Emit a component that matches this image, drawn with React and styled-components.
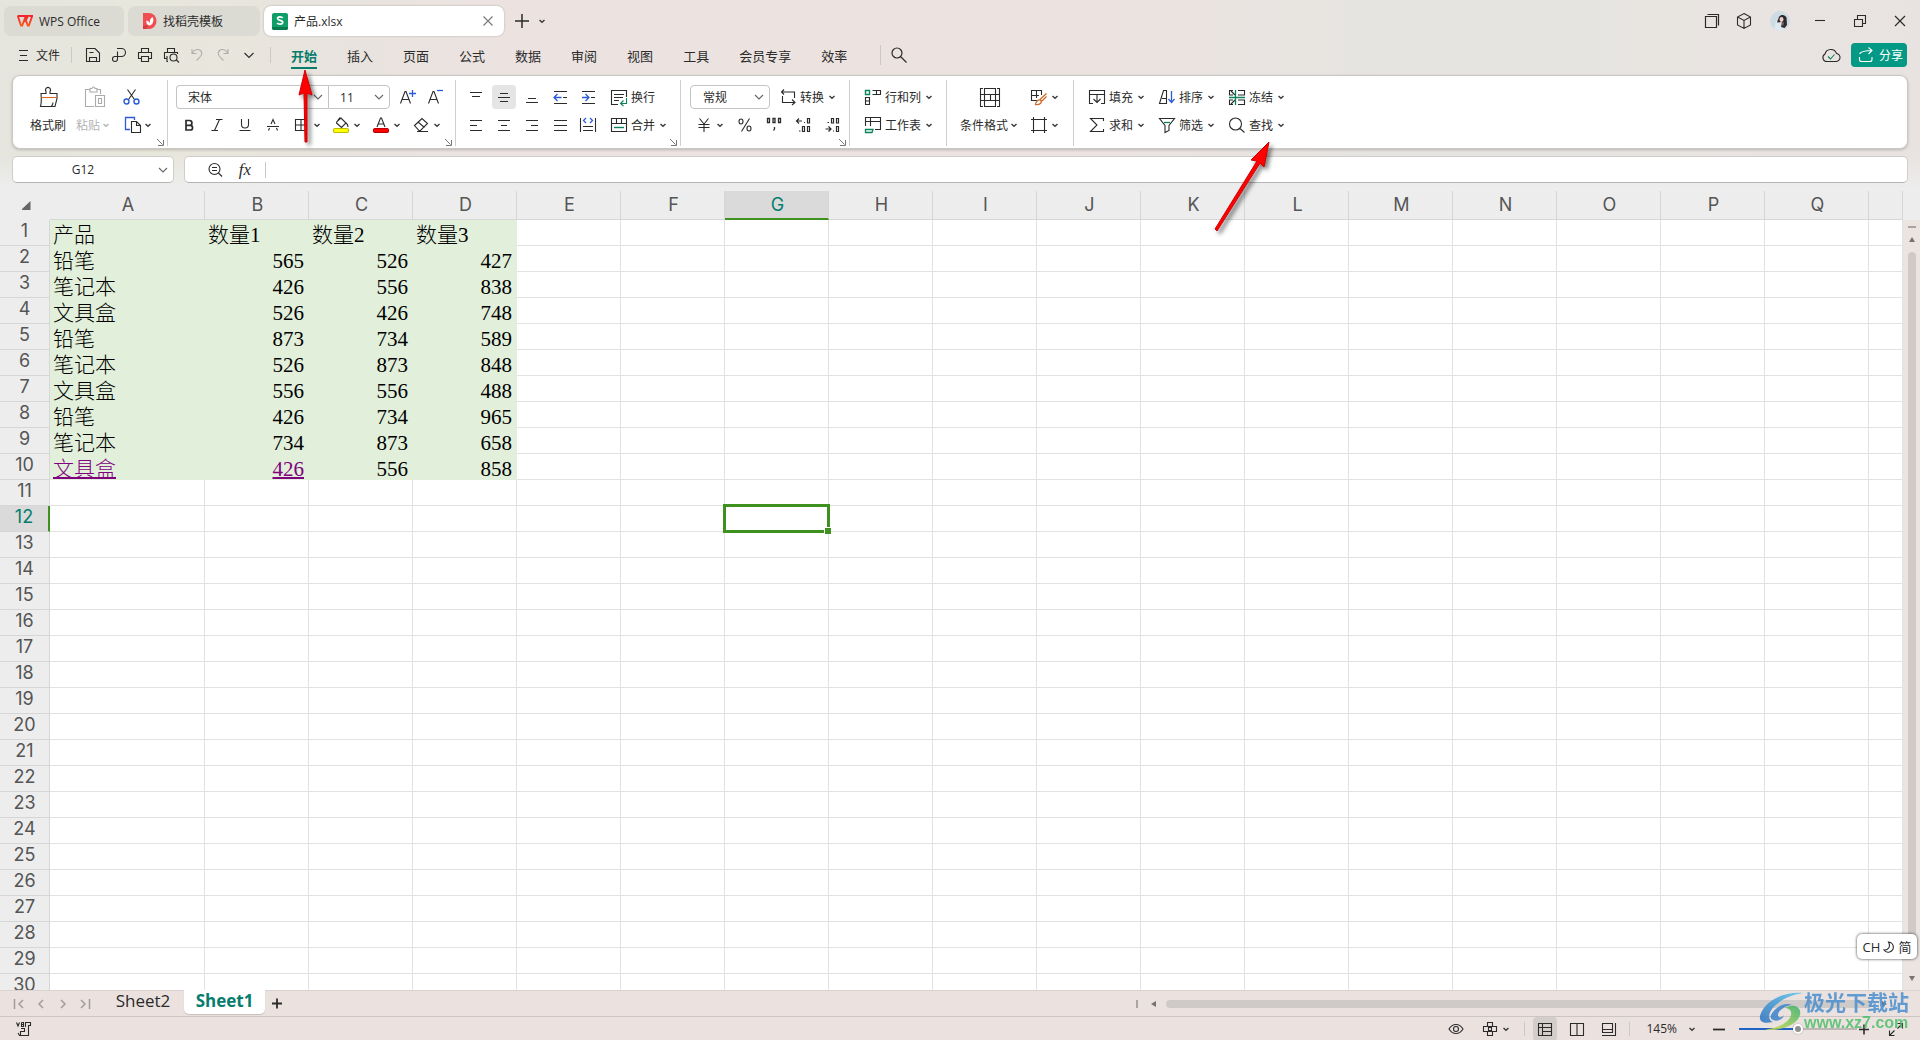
import styled, { createGlobalStyle } from 'styled-components';
import { useState } from 'react';

const ink = '#2b2b2b';
const teal = '#067d6d';
const blue = '#2b5bd7';
const green = '#0b8457';
const orange = '#d0692c';
const uiFont = `'Open Sans', 'Noto Sans CJK SC', sans-serif`;

const GlobalStyle = createGlobalStyle`
  * { box-sizing: border-box; }
  body {
    margin: 0;
    overflow: hidden;
    font-family: ${uiFont};
    font-size: 12px;
    color: ${ink};
  }
  button, input, select { font: inherit; color: inherit; margin: 0; }
  svg { display: block; flex: none; }
`;

const Page = styled.div`
  position: relative;
  height: 100vh;
  display: flex;
  flex-direction: column;
  background:
    linear-gradient(to bottom, rgba(237,237,237,0) 156px, #ededed 188px, #ededed 220px, rgba(237,237,237,0) 221px),
    linear-gradient(to right, #e5e5de 0, #e8e7dc 8%, #e8e3de 18%, #ece3e1 26%, #ece3e1 58%, #e5e4e0 72%, #e5e4e0 81%, #e9e4e1 90%, #e8e3e0 100%);
`;

/* ---------- shared controls ---------- */
const Plain = styled.button`
  display: flex;
  align-items: center;
  justify-content: center;
  gap: ${p => p.$gap || 0}px;
  width: ${p => (p.$w ? `${p.$w}px` : 'auto')};
  height: ${p => p.$h || 24}px;
  padding: 0;
  border: 0;
  border-radius: 4px;
  background: ${p => (p.$on ? '#e5e5e5' : 'transparent')};
  color: ${p => (p.$dim ? '#b3b3b3' : 'inherit')};
  white-space: nowrap;
`;

const Spacer = styled.div`
  flex: 1;
`;

const Rule = styled.span`
  flex: none;
  width: 1px;
  height: ${p => p.$h || 16}px;
  background: #cbc8c5;
`;

const Icon = ({ children, size = 20, color = ink, box = 20 }) => (
  <svg width={size} height={size} viewBox={`0 0 ${box} ${box}`} fill="none" stroke={color} strokeWidth="1.1" aria-hidden="true">
    {children}
  </svg>
);

const Caret = ({ color = '#3c3c3c' }) => (
  <svg width="12" height="12" viewBox="0 0 12 12" fill="none" stroke={color} strokeWidth="1.5" aria-hidden="true">
    <path d="M3.5 5L6 7.2L8.5 5" />
  </svg>
);

const Chevron = ({ color = '#666' }) => (
  <svg width="20" height="12" viewBox="0 0 20 12" fill="none" stroke={color} strokeWidth="1.1" aria-hidden="true">
    <path d="M6 4L10 8L14 4" />
  </svg>
);

/* ---------- window tabs ---------- */
const TitleBar = styled.header`
  display: flex;
  align-items: center;
  gap: 4px;
  height: 42px;
  padding: 0 0 0 4px;
`;

const DocTab = styled.button`
  display: flex;
  align-items: center;
  gap: 6px;
  width: ${p => p.$w}px;
  height: 30px;
  padding: 0 8px 0 ${p => p.$pad}px;
  border: 0;
  border-radius: 7px;
  text-align: left;
  background: ${p => (p.$active ? '#fff' : '#dbdad3')};
  box-shadow: ${p => (p.$active ? '0 0 2px rgba(0,0,0,.3)' : 'none')};
`;

const TabButtons = styled.div`
  display: flex;
  align-items: center;
`;

const WindowButtons = styled.div`
  display: flex;
  align-items: center;

  button { width: 40px; }
  button:nth-child(-n + 2) { width: 32px; }
`;

const WpsLogo = () => (
  <svg width="16" height="12" viewBox="0 0 16 12" aria-hidden="true">
    <defs>
      <linearGradient id="wps" x1="0" y1="0" x2="0" y2="1">
        <stop offset="0" stopColor="#f5222d" />
        <stop offset="1" stopColor="#fb5b1c" />
      </linearGradient>
    </defs>
    <path d="M.6 1H11L9.7 3.6L8.2 1M.8 1L4 10.6H5.2L8 3.4L10.8 10.6H11.9L15.2 1H12.2" fill="none" stroke="url(#wps)" strokeWidth="1.9" />
  </svg>
);

const DocerLogo = () => (
  <svg width="15" height="16" viewBox="0 0 15 16" aria-hidden="true">
    <path d="M1 0H7A7.5 8 0 0 1 7 16H2.5A1.5 1.5 0 0 1 1 14.500Z" fill="#f04f52" />
    <path d="M1 12.500H6L4 16H1Z" fill="#d43b42" />
    <path d="M8 12.500C4.500 12 4 9.500 4.500 7.500C6.500 8 7.500 9 8 10.500C7.300 7.500 8.500 5 10.800 4C12 7 11.500 11 8 12.500Z" fill="#fff" />
  </svg>
);

const SheetLogo = () => (
  <svg width="16" height="17" viewBox="0 0 16 17" aria-hidden="true">
    <rect width="16" height="17" rx="2" fill="#0f9d68" />
    <path d="M0 14H16V15A2 2 0 0 1 14 17H2A2 2 0 0 1 0 15Z" fill="#087a4e" />
    <path d="M10.700 5C10 3.700 5.500 3.200 5.500 5.600C5.500 8 10.700 6.700 10.700 9.300C10.700 11.800 6 11.500 5.200 9.800" fill="none" stroke="#fff" strokeWidth="1.700" />
  </svg>
);

const Avatar = () => (
  <svg width="20" height="20" viewBox="0 0 20 20" aria-hidden="true">
    <defs><clipPath id="av"><circle cx="10" cy="10" r="10" /></clipPath></defs>
    <g clipPath="url(#av)">
      <rect width="20" height="20" fill="#cddce2" />
      <path d="M4 20L6 10L11 10L15 20Z" fill="#dfeaee" />
      <path d="M9 6C11 3 15 3.500 16.500 6.500L17 14L14.500 17L11 16L12 11L7 11.500Z" fill="#2c2830" />
      <ellipse cx="11.500" cy="8.500" rx="2" ry="2.400" fill="#ecd0c6" />
      <path d="M11.500 12L14 11L13 15.500Z" fill="#9a6468" />
    </g>
  </svg>
);

/* ---------- menu row ---------- */
const MenuBar = styled.nav`
  display: flex;
  align-items: center;
  height: 26px;
  padding: 0 13px 0 15px;
`;

const QuickAccess = styled.div`
  display: flex;
  align-items: center;
  gap: 6px;
  margin: 0 11px;
`;

const MenuTabs = styled.div`
  display: flex;
  align-items: center;
  gap: 30px;
  margin: 0 33px 0 20px;
`;

const MenuTab = styled.button`
  height: 28px;
  padding: 0;
  border: 0;
  font-size: 13px;
  color: ${p => (p.$active ? teal : ink)};
  font-weight: ${p => (p.$active ? 700 : 400)};
  background: ${p => (p.$active ? `linear-gradient(${teal}, ${teal}) bottom / 100% 2px no-repeat` : 'none')};
`;

const QuickRule = styled(Rule)`
  margin-left: 11px;
`;

const SearchButton = styled(Plain)`
  margin-left: 8px;
`;

const ShareButton = styled.button`
  display: flex;
  align-items: center;
  gap: 3px;
  width: 56px;
  height: 24px;
  margin-left: 10px;
  padding: 0 5px;
  border: 0;
  border-radius: 4px;
  background: #049984;
  color: #fff;
  white-space: nowrap;
`;

/* ---------- ribbon ---------- */
const Ribbon = styled.section`
  display: flex;
  align-items: flex-start;
  height: 74px;
  margin: 7px 12px 0;
  border: 1px solid #cac8c4;
  border-radius: 8px;
  background: #fff;
  box-shadow: 0 1px 3px rgba(0, 0, 0, .2);
`;

const GroupBox = styled.div`
  display: flex;
  flex-direction: column;
  gap: 1px;
  height: 66px;
  margin-top: 4px;
  padding: 5px 0 0;
  border-right: ${p => (p.$last ? 0 : '1px solid #cfcfcf')};
`;

const GroupBody = styled.div`
  display: flex;
  gap: ${p => p.$gap}px;
  padding: 0 ${p => p.$r}px 0 ${p => p.$l}px;
`;

const Launcher = styled.button`
  align-self: flex-end;
  width: 8px;
  height: 8px;
  margin-right: 3px;
  padding: 0;
  border: 0;
  background: none;
`;

const Column = styled.div`
  display: flex;
  flex-direction: column;
  align-items: flex-start;
  gap: 4px;
`;

const Line = styled.div`
  display: flex;
  align-items: center;
  gap: ${p => p.$gap}px;
  padding-left: ${p => p.$indent || 0}px;
  height: 24px;
`;

const BigTool = styled.button`
  display: flex;
  flex-direction: column;
  align-items: center;
  gap: 4px;
  padding: 0;
  border: 0;
  background: none;
  white-space: nowrap;
  color: ${p => (p.$dim ? '#b3b3b3' : 'inherit')};

  span {
    display: flex;
    align-items: center;
    height: 24px;
  }
`;

const Picker = styled.label`
  display: flex;
  align-items: center;
  width: ${p => p.$w}px;
  height: 24px;
  padding-left: ${p => p.$pad}px;
  border: 1px solid #c4c4c4;
  border-radius: ${p => p.$radius || '4px'};
  border-right-width: ${p => (p.$joined ? 0 : 1)}px;

  select {
    flex: 1;
    min-width: 0;
    padding: 0;
    border: 0;
    outline: 0;
    appearance: none;
    background: none;
  }
`;

const Group = ({ l = 12, r = 12, gap = 10, launcher, last, children }) => (
  <GroupBox $last={last}>
    <GroupBody $l={l} $r={r} $gap={gap}>{children}</GroupBody>
    {launcher && (
      <Launcher aria-label={launcher}>
        <svg width="8" height="8" viewBox="0 0 8 8" fill="none" stroke="#777"><path d="M1 1L6.500 6.500M7.500 2V7.500H2" /></svg>
      </Launcher>
    )}
  </GroupBox>
);

const Tool = ({ icon, label, name, arrow = true }) => (
  <Plain $gap={label ? 2 : 0} aria-label={name}>
    <Icon>{icon}</Icon>
    {label}
    {arrow && <Caret />}
  </Plain>
);

const FontPicker = ({ name, value, ...rest }) => (
  <Picker {...rest}>
    <select aria-label={name} defaultValue={value}>
      <option>{value}</option>
    </select>
    <Chevron />
  </Picker>
);

const quick = [
  { name: '保存', icon: <path d="M3.500 3.500H12L16.500 8V16.500H3.500ZM6.500 16.500V12.500H13.500V16.500M6.500 7.500H10.500" /> },
  { name: '输出为PDF', icon: <path d="M8 3.500H12.500A3.500 3.500 0 0 1 12.500 11.500H6A2.500 2.500 0 1 0 8.500 14V6.500" /> },
  { name: '打印', icon: <path d="M6.500 7V3.500H13.500V7M6 13.500H3.500V7.500H16.500V13.500H14M6.500 11.500H13.500V16.500H6.500Z" /> },
  { name: '打印预览', icon: <path d="M6.500 7V3.500H13.500V7M6 13.500H3.500V7.500H16.500V9M7 16.500H6V11M15.500 15L18 17.500M9 12.500A3.500 3.500 0 1 0 16 12.500A3.500 3.500 0 1 0 9 12.500" /> },
  { name: '撤销', dim: true, icon: <path d="M5 4V8.500H9.500M5 8.500C7 4.500 11 3.500 13.500 5.500C16.500 8.500 14 11.500 9.500 15.500" /> },
  { name: '恢复', dim: true, icon: <path d="M15 4V8.500H10.500M15 8.500C13 4.500 9 3.500 6.500 5.500C3.500 8.500 6 11.500 10.500 15.500" /> },
  { name: '更多', icon: <path d="M5.500 8L10 12.500L14.500 8" /> },
];

const menu = ['开始', '插入', '页面', '公式', '数据', '审阅', '视图', '工具', '会员专享', '效率'];

const alignTools = [
  { name: '顶端对齐', icon: <path d="M4 5.500H16M6 9.500H14" /> },
  { name: '垂直居中', on: true, icon: <path d="M6 6.500H14M4 10.500H16M6 14.500H14" /> },
  { name: '底端对齐', icon: <path d="M6 11.500H14M4 15.500H16" /> },
  { name: '减少缩进', icon: <><path d="M4 4.500H17M13 10.500H17M4 16.500H17" /><path d="M4 10.500H11.500M7.500 7L4 10.500L7.500 14" stroke={blue} strokeWidth="1.300" /></> },
  { name: '增加缩进', icon: <><path d="M4 4.500H17M13 10.500H17M4 16.500H17" /><path d="M4 10.500H11M7.500 7L11 10.500L7.500 14" stroke={blue} strokeWidth="1.300" /></> },
  { name: '左对齐', icon: <path d="M4 5.500H16M4 10.500H11M4 15.500H16" /> },
  { name: '水平居中', icon: <path d="M4 5.500H16M7 10.500H13M4 15.500H16" /> },
  { name: '右对齐', icon: <path d="M4 5.500H16M9 10.500H16M4 15.500H16" /> },
  { name: '两端对齐', icon: <path d="M4 5.500H17M4 10.500H17M4 15.500H17" /> },
  { name: '分散对齐', icon: <><path d="M2.500 3V17M17.500 3V17M5 11.500H15M5 15.500H15" /><path d="M8 3L5.500 5.500L8 8M12 3L14.500 5.500L12 8" stroke={blue} strokeWidth="1.300" /></> },
];

const AlignGrid = styled.div`
  display: grid;
  grid-template-columns: repeat(5, 24px);
  gap: 4px;
`;

const HomeRibbon = () => (
  <Ribbon>
    <Group l={17} r={13} launcher="剪贴板设置">
      <BigTool>
        <Icon size={24} box={24}>
          <path d="M4.500 21.500C5.500 18 5.500 14 5 8.500H10V6.500A2.500 2.500 0 1 1 14 6.500V8.500H21V13.500L19 21.500ZM15.500 21C16.500 20 17 18.500 17 17.500" />
          <path d="M5 12.500H21" stroke={orange} />
        </Icon>
        <span>格式刷</span>
      </BigTool>
      <BigTool $dim>
        <Icon size={24} box={24} color="#ababab">
          <path d="M8 4.500H3.500V21.500H12M15 4.500H18.500V9M8 3.500H10A1.500 1.500 0 0 1 13 3.500H15V7H8ZM13.500 10.500H22.500V21.500H13.500ZM16.500 13.500H19.500V18.500H16.500Z" />
        </Icon>
        <span>粘贴<Caret color="#b3b3b3" /></span>
      </BigTool>
      <Column>
        <Plain $w={20} aria-label="剪切">
          <Icon>
            <path d="M5.500 2.500L12.500 12.500M13.500 2.500L6.500 12.500" />
            <path d="M2 14.500A2.500 2.500 0 1 0 7 14.500A2.500 2.500 0 1 0 2 14.500M12 14.500A2.500 2.500 0 1 0 17 14.500A2.500 2.500 0 1 0 12 14.500" stroke={blue} strokeWidth="1.400" />
          </Icon>
        </Plain>
        <Tool name="复制" icon={<><path d="M8 14.500H3.500V2.500H12.500V5" stroke={blue} strokeWidth="1.300" /><path d="M9.500 6.500H14.500L18.500 10.500V17.500H9.500ZM14.500 6.500V10.500H18.500" /></>} />
      </Column>
    </Group>

    <Group l={8} r={9} launcher="字体设置">
      <Column>
        <Line $gap={8}>
          <Line $gap={0}>
            <FontPicker name="字体" value="宋体" $w={152} $pad={11} $joined $radius="4px 0 0 4px" />
            <FontPicker name="字号" value="11" $w={62} $pad={11} $radius="0 4px 4px 0" />
          </Line>
          <Plain $w={20} aria-label="增大字号">
            <Icon><path d="M2.500 16.500L7 4.500H8L12.500 16.500M4 12.500H11" /><path d="M11 6.500H18M14.500 3V10" stroke={blue} strokeWidth="1.300" /></Icon>
          </Plain>
          <Plain $w={20} aria-label="减小字号">
            <Icon><path d="M2.500 16.500L7 4.500H8L12.500 16.500M4 12.500H11" /><path d="M11 3.500H17" stroke={blue} strokeWidth="1.300" /></Icon>
          </Plain>
        </Line>
        <Line $gap={8} $indent={3}>
          <Plain $w={20} aria-label="加粗"><Icon><path d="M7 5.500H10.500A2.300 2.300 0 0 1 10.500 10.300H7ZM7 10.300H11.200A2.300 2.300 0 0 1 11.200 15H7Z" strokeWidth="1.700" /></Icon></Plain>
          <Plain $w={20} aria-label="倾斜"><Icon><path d="M9 4.500H15.500M4.500 15.500H11M12.500 4.500L7.500 15.500" /></Icon></Plain>
          <Plain $w={20} aria-label="下划线"><Icon><path d="M6.500 4V9.500A3.500 3.500 0 0 0 13.500 9.500V4M4.500 15.500H15.500" /></Icon></Plain>
          <Plain $w={20} aria-label="删除线"><Icon><path d="M8 9L10 4.500L12 9M6.500 13L5.500 15.500M13.500 13L14.500 15.500M4 11.500H16" /></Icon></Plain>
          <Tool name="边框" icon={<path d="M4.500 4.500H15.500V15.500H4.500ZM10 4.500V15.500M4.500 10H15.500" />} />
          <Tool name="填充颜色" icon={<><path d="M6 6.500L10 3L15 8L10.500 12.500L5.500 8ZM9 2.500L7 5M15 8C16.500 9 17 10.500 17 12" /><rect x="2.500" y="13.500" width="15" height="4" rx="1.500" fill="#ff0" stroke="#bdbd00" /></>} />
          <Tool name="字体颜色" icon={<><path d="M6 12L9.500 3H10.500L14 12M7.500 9H12.500" /><rect x="2.500" y="13.500" width="15" height="4" rx="1.500" fill="#f00" stroke="#b80000" /></>} />
          <Tool name="清除" icon={<path d="M3.500 10.500L11 3.500L16.500 8.500L9.500 15.500H8ZM7 7L13.500 12.500M6 16.500H17" />} />
        </Line>
      </Column>
    </Group>

    <Group l={8} r={11} gap={9} launcher="对齐设置">
      <AlignGrid>
        {alignTools.map(t => (
          <Plain key={t.name} $w={24} $on={t.on} aria-label={t.name}><Icon>{t.icon}</Icon></Plain>
        ))}
      </AlignGrid>
      <Column>
        <Tool arrow={false} label="换行" icon={<><path d="M9 17.500H2.500V3.500H17.500V10M5 7.500H15M5 10.500H14M5 13.500H10" /><path d="M17.500 11V16.500H12M14.500 13.500L11.500 16.500L14.500 19" stroke={green} /></>} />
        <Tool label="合并" icon={<><path d="M2.500 3.500H17.500V16.500H2.500ZM2.500 8.500H17.500M7.500 3.500V8.500M12.500 3.500V8.500" /><path d="M5 12.500H15" stroke={green} strokeWidth="1.400" /></>} />
      </Column>
    </Group>

    <Group l={9} r={7} launcher="数字格式设置">
      <Column>
        <Line $gap={8}>
          <FontPicker name="数字格式" value="常规" $w={80} $pad={12} />
          <Tool label="转换" icon={<path d="M6 2.500L3.500 5L6 7.500M3.500 5H16.500V11M14 12.500L17 15.500L14 18M16.500 15.500H4.500V9" />} />
        </Line>
        <Line $gap={9} $indent={4}>
          <Tool name="货币" icon={<path d="M5.500 3.500L10 9L14.500 3.500M4.500 9.500H15.500M4.500 12.500H15.500M10 9V17" />} />
          <Plain $w={20} aria-label="百分比"><Icon><path d="M14.500 3.500L6.500 16.500M4 6.500A2 2.500 0 1 0 8 6.500A2 2.500 0 1 0 4 6.500M12 13.500A2 2.500 0 1 0 16 13.500A2 2.500 0 1 0 12 13.500" /></Icon></Plain>
          <Plain $w={20} aria-label="千位分隔"><Icon><path d="M3.500 3.500H5.500V7.500H3.500ZM9 3.500H11V7.500H9ZM14.500 3.500H16.500V7.500H14.500ZM10.500 12V14L9.500 15.500" strokeWidth="1.300" /></Icon></Plain>
          <Plain $w={20} aria-label="增加小数位"><Icon><path d="M3.500 6H9M6 3.500L3.500 6L6 8.500M14.500 3.500H16.500V8H14.500ZM9.500 11.500H11.500V16.500H9.500ZM14.500 11.500H16.500V16.500H14.500ZM11 7.500H12M6 16H7.500" strokeWidth="1.200" /></Icon></Plain>
          <Plain $w={20} aria-label="减少小数位"><Icon><path d="M3.500 14H9M6.500 11.500L9 14L6.500 16.500M14.500 11.500H16.500V16.500H14.500ZM9.500 3.500H11.500V8H9.500ZM14.500 3.500H16.500V8H14.500ZM11 16H12M5.500 7.500H7" strokeWidth="1.200" /></Icon></Plain>
        </Line>
      </Column>
    </Group>

    <Group l={13} r={11}>
      <Column>
        <Tool label="行和列" icon={<><path d="M9.500 3.500H17.500V7.500H9.500M13.500 3.500V7.500M2.500 10.500H6.500V17.500H2.500ZM2.500 14H6.500" /><path d="M2.500 3.500H6.500V7.500H2.500Z" stroke={green} strokeWidth="1.400" /></>} />
        <Tool label="工作表" icon={<><path d="M2.500 11V2.500H17.500V14.500H12M2.500 6.500H17.500M7.500 2.500V11" /><path d="M2.500 14.500H10L9 17.500H2.500Z" stroke={green} strokeWidth="1.300" /></>} />
      </Column>
    </Group>

    <Group l={13} gap={9}>
      <BigTool>
        <Icon size={24} box={24}>
          <path d="M5 3.500H2.500V21.500H5M19 3.500H21.500V21.500H19M6.500 3.500H17.500V21.500H6.500ZM2.500 9.500H21.500M2.500 15.500H21.500M12.500 9.500V15.500" />
        </Icon>
        <span>条件格式<Caret /></span>
      </BigTool>
      <Column>
        <Tool name="表格样式" icon={<><path d="M8 13.500H2.500V3.500H12.500V8M2.500 8.500H10M7.500 3.500V11" /><path d="M17.500 6.500L11 12.500M17.500 9.500L13 14M6.500 17.500C7 14 9 12.500 11.500 13C13.500 15 11.500 18 6.500 17.500Z" stroke={orange} strokeWidth="1.300" /></>} />
        <Tool name="单元格样式" icon={<path d="M4.500 2V18M15.500 2V18M2 4.500H18M2 15.500H18" />} />
      </Column>
    </Group>

    <Group l={13} last>
      <Column>
        <Tool label="填充" icon={<path d="M6 16.500H2.500V3.500H17.500V16.500H14M2.500 7.500H17.500M10 8V15M6.500 12L10 15.500L13.500 12" />} />
        <Tool label="求和" icon={<path d="M16.500 6V3.500H3.500L10 10L3.500 16.500H16.500V14" />} />
      </Column>
      <Column>
        <Tool label="排序" icon={<><path d="M2.500 16.500L6.500 3.500H9.500V16.500ZM5 11.500H9.500" /><path d="M14.500 4V15M11.500 12L14.500 15.500L17.500 12" stroke={blue} strokeWidth="1.300" /></>} />
        <Tool label="筛选" icon={<><path d="M2.500 3.500H17.500L12 10.500V15.500L8 17.500V10.500Z" /><path d="M7 7.500H13" stroke={green} strokeWidth="1.300" /></>} />
      </Column>
      <Column>
        <Tool label="冻结" icon={<><path d="M6 3.500H2.500V8H6M6 13H2.500V17.500H6M11 3.500H17.500V8H11M11 13H17.500V17.500H11M4 4L8 8M4 17L8 13" /><path d="M2 10.500H18M8.500 3V18" stroke={green} strokeWidth="1.300" /></>} />
        <Tool label="查找" icon={<path d="M2.500 9A6 6 0 1 0 14.500 9A6 6 0 1 0 2.500 9M12.500 13L17.500 17.500" />} />
      </Column>
    </Group>
  </Ribbon>
);

/* ---------- formula bar ---------- */
const FormulaRow = styled.div`
  display: flex;
  gap: 10px;
  height: 27px;
  margin: 7px 12px 8px;
`;

const Field = styled.div`
  display: flex;
  align-items: center;
  flex: ${p => (p.$w ? 'none' : 1)};
  width: ${p => (p.$w ? `${p.$w}px` : 'auto')};
  padding-left: ${p => p.$pad || 0}px;
  border: 1px solid #cfcdca;
  border-bottom-color: #b5b5b3;
  border-radius: 5px;
  background: #fff;

  input {
    flex: 1;
    min-width: 0;
    padding: 0;
    border: 0;
    outline: 0;
    background: none;
    text-align: ${p => (p.$w ? 'center' : 'left')};
  }
`;

const Fx = styled.em`
  width: 40px;
  text-align: center;
  font: italic 17px 'Liberation Serif', serif;
`;

/* ---------- sheet ---------- */
const SheetArea = styled.main`
  display: flex;
  flex: 1;
  min-height: 0;
`;

const GridClip = styled.div`
  flex: 1;
  min-width: 0;
  overflow: hidden;
  background: #fff;
`;

const Grid = styled.table`
  width: 100%;
  table-layout: fixed;
  border-collapse: separate;
  border-spacing: 0;
`;

const HeadCell = styled.th`
  height: 29px;
  padding: 0 0 0 2px;
  border-right: 1px solid #d6d6d6;
  border-bottom: ${p => (p.$on ? '2px solid #3f911f' : '1px solid #d6d6d6')};
  background: ${p => (p.$on ? '#dadada' : '#ededed')};
  color: ${p => (p.$on ? teal : '#555')};
  font: 400 18px/20px Inter, sans-serif;

  &:first-child {
    border: 0;
  }
  svg { margin-left: 20px; }
`;

const RowHead = styled.th`
  height: 26px;
  padding: 0;
  border-right: ${p => (p.$on ? '2px solid #3f911f' : '1px solid #d6d6d6')};
  border-bottom: 1px solid #d6d6d6;
  background: ${p => (p.$on ? '#dadada' : '#ededed')};
  color: ${p => (p.$on ? teal : '#555')};
  font: 400 18px/22px Inter, sans-serif;
  vertical-align: top;
`;

const Cell = styled.td`
  position: relative;
  height: 26px;
  padding: 0 4px 0 3px;
  border-right: 1px solid ${p => (p.$filled ? '#e2efda' : '#e2e2e2')};
  border-bottom: 1px solid ${p => (p.$filled ? '#e2efda' : '#e2e2e2')};
  background: ${p => (p.$filled ? '#e2efda' : '#fff')};
  color: ${p => (p.$visited ? '#800080' : '#000')};
  font: 21px/20px 'Liberation Serif', 'Noto Sans CJK SC', serif;
  font-weight: 300;
  text-align: ${p => (p.$num ? 'right' : 'left')};
  vertical-align: bottom;
  white-space: nowrap;

  a {
    color: inherit;
    text-decoration: underline 2px;
    text-underline-offset: 1px;
  }
`;

const Selection = styled.div`
  position: absolute;
  z-index: 1;
  inset: -2px;
  border: 3px solid #3f911f;

  &::after {
    content: '';
    position: absolute;
    right: -4px;
    bottom: -4px;
    width: 6px;
    height: 6px;
    border: solid #fff;
    border-width: 1px 0 0 1px;
    background: #3f911f;
  }
`;

const VScroll = styled.div`
  display: flex;
  flex-direction: column;
  align-items: center;
  width: 17px;
  margin-top: 29px;
  padding: 6px 0 8px;
  gap: 8px;
  background: #ebe4e1;

  i {
    width: 8px;
    height: 2px;
    background: #aaa5a3;
  }
`;

const VTrack = styled.div`
  display: flex;
  flex-direction: column;
  flex: 1;

  &::before {
    content: '';
    flex: 0 0 96%;
    width: 8px;
    border-radius: 4px;
    background: #cfcac8;
  }
`;

const columns = 'ABCDEFGHIJKLMNOPQ'.split('');

const data = [
  ['产品', '数量1', '数量2', '数量3'],
  ['铅笔', 565, 526, 427],
  ['笔记本', 426, 556, 838],
  ['文具盒', 526, 426, 748],
  ['铅笔', 873, 734, 589],
  ['笔记本', 526, 873, 848],
  ['文具盒', 556, 556, 488],
  ['铅笔', 426, 734, 965],
  ['笔记本', 734, 873, 658],
  ['文具盒', 426, 556, 858],
];

const rows = Array.from({ length: 30 }, (_, i) => i + 1);

const Triangle = ({ d }) => (
  <svg width="8" height="8" viewBox="0 0 8 8" fill="#77716f" aria-hidden="true"><path d={d} /></svg>
);

const Spreadsheet = () => (
  <SheetArea>
    <GridClip>
      <Grid>
        <colgroup>
          <col width="50" />
          <col width="155" />
          {columns.slice(1).map(c => <col key={c} width="104" />)}
          <col />
        </colgroup>
        <thead>
          <tr>
            <HeadCell aria-label="全选">
              <svg width="9" height="9" viewBox="0 0 9 9" fill="#666"><path d="M8.500 0V9H0V8Z" /></svg>
            </HeadCell>
            {columns.map(c => <HeadCell key={c} scope="col" $on={c === 'G'}>{c}</HeadCell>)}
            <HeadCell />
          </tr>
        </thead>
        <tbody>
          {rows.map(r => (
            <tr key={r}>
              <RowHead scope="row" $on={r === 12}>{r}</RowHead>
              {columns.map((c, i) => {
                const value = data[r - 1]?.[i];
                const visited = r === 10 && i < 2;
                return (
                  <Cell key={c} $filled={value !== undefined} $num={typeof value === 'number'} $visited={visited}>
                    {visited ? <a href="#sheet">{value}</a> : value}
                    {c === 'G' && r === 12 && <Selection />}
                  </Cell>
                );
              })}
              <Cell />
            </tr>
          ))}
        </tbody>
      </Grid>
    </GridClip>
    <VScroll>
      <i />
      <Triangle d="M4 1L7 6H1Z" />
      <VTrack />
      <Triangle d="M1 2H7L4 7Z" />
    </VScroll>
  </SheetArea>
);

/* ---------- sheet tabs and status ---------- */
const SheetBar = styled.div`
  display: flex;
  align-items: center;
  height: 27px;
  padding: 0 32px 0 8px;
  border-top: 1px solid #d8d3d1;
  border-bottom: 1px solid #cdc5c3;
  background: #ebe2df;
`;

const SheetTab = styled.button`
  align-self: flex-start;
  width: ${p => p.$w}px;
  height: 24px;
  margin-top: -1px;
  padding: 0 0 2px ${p => (p.$active ? 0 : 6)}px;
  border: 0;
  border-radius: 0 0 5px 5px;
  font-size: 17px;
  line-height: 22px;
  font-weight: ${p => (p.$active ? 700 : 400)};
  color: ${p => (p.$active ? teal : ink)};
  background: ${p => (p.$active ? '#fff' : 'none')};
  box-shadow: ${p => (p.$active ? '0 1px 1px rgba(0,0,0,.15)' : 'none')};
`;

const HScroll = styled.div`
  display: flex;
  align-items: center;
  gap: 8px;
  width: 40%;

  i {
    width: 2px;
    height: 8px;
    margin-right: 4px;
    background: #aaa5a3;
  }
`;

const HThumb = styled.div`
  flex: 1;
  height: 8px;
  border-radius: 4px;
  background: #cfcac8;
`;

const StatusBar = styled.footer`
  display: flex;
  align-items: center;
  height: 23px;
  padding: 0 14px;
  background: #ebe2e0;
`;

const ReadMode = styled(Plain)`
  margin: 0 12px 0 14px;
`;

const Views = styled.div`
  display: flex;
  gap: 8px;
  margin: 0 8px;
`;

const View = styled(Plain)`
  background: ${p => (p.$on ? '#d3cdcb' : 'none')};
`;

const ZoomValue = styled(Plain)`
  gap: 9px;
  margin: 0 11px 0 16px;
`;

const Zoom = styled.input`
  appearance: none;
  width: 118px;
  height: 12px;

  /* outranks the margin reset on inputs */
  && { margin: 0 0 0 10px; }

  background: linear-gradient(to right, #2063c8 50%, #bdb7b5 50%) center / 100% 2px no-repeat;

  &::-webkit-slider-thumb {
    appearance: none;
    width: 10px;
    height: 10px;
    border: 2px solid #fff;
    border-radius: 50%;
    background: #8e8e8e;
    box-shadow: 0 0 2px rgba(0, 0, 0, .3);
  }
`;

const FullScreen = styled(Plain)`
  margin-left: 15px;
`;

/* ---------- overlays ---------- */
const ImeBadge = styled.div`
  position: absolute;
  right: 3px;
  bottom: 81px;
  display: flex;
  align-items: center;
  justify-content: center;
  gap: 3px;
  width: 60px;
  height: 25px;
  border-radius: 5px;
  background: #fff;
  font-size: 13px;
  box-shadow: 0 0 3px rgba(0, 0, 0, .8);
`;

const Watermark = styled.div`
  position: absolute;
  right: 11px;
  bottom: 7px;
  display: flex;
  align-items: center;
  pointer-events: none;
  opacity: .85;
`;

const WatermarkText = styled.div`
  font: 700 21px/24px 'Noto Sans CJK SC', sans-serif;
  color: #4a8fd0;

  small {
    display: block;
    font: 700 16px/20px 'Liberation Sans', sans-serif;
    color: #4fbf6b;
  }
`;

const Arrows = styled.svg`
  position: absolute;
  left: 0;
  top: 0;
  pointer-events: none;
  filter: drop-shadow(3px 3px 2px rgba(0, 0, 0, .5));
`;

const App = () => {
  const [zoom, setZoom] = useState(50);

  return (
    <Page>
      <GlobalStyle />
      <TitleBar>
        <DocTab $w={120} $pad={13}><WpsLogo />WPS Office</DocTab>
        <DocTab $w={132} $pad={14}><DocerLogo />找稻壳模板</DocTab>
        <DocTab $w={240} $pad={8} $active>
          <SheetLogo />产品.xlsx
          <Spacer />
          <Icon size={16} box={16} color="#777"><path d="M3.500 3.500L12.500 12.500M12.500 3.500L3.500 12.500" /></Icon>
        </DocTab>
        <TabButtons>
          <Plain $w={28} aria-label="新建"><Icon><path d="M10 3V17M3 10H17" strokeWidth="1.500" /></Icon></Plain>
          <Plain $w={12} aria-label="标签列表"><Caret /></Plain>
        </TabButtons>
        <Spacer />
        <WindowButtons>
          <Plain aria-label="窗口"><Icon><path d="M3.500 5.500H14.500V16.500H3.500ZM5.500 3.500H16.500V14.500" strokeWidth="1.200" /></Icon></Plain>
          <Plain aria-label="应用"><Icon><path d="M10 2.500L16.500 6V14L10 17.500L3.500 14V6ZM3.500 6L10 9.500L16.500 6M10 9.500V17.500" /></Icon></Plain>
          <Plain aria-label="账号"><Avatar /></Plain>
          <Plain aria-label="最小化"><Icon><path d="M5 9.500H15" /></Icon></Plain>
          <Plain aria-label="还原"><Icon><path d="M4.500 8.500H12.500V15.500H4.500ZM7.500 8V4.500H15.500V12.500H13" /></Icon></Plain>
          <Plain aria-label="关闭"><Icon><path d="M5 5L15 15M15 5L5 15" strokeWidth="1.200" /></Icon></Plain>
        </WindowButtons>
      </TitleBar>

      <MenuBar>
        <Plain $gap={4}>
          <Icon size={17} box={17}><path d="M4 3.500H13M5 8.500H12M4 13.500H13" /></Icon>文件
        </Plain>
        <QuickRule />
        <QuickAccess>
          {quick.map(q => (
            <Plain key={q.name} $w={20} aria-label={q.name}>
              <Icon color={q.dim ? '#b0aeab' : ink}>{q.icon}</Icon>
            </Plain>
          ))}
        </QuickAccess>
        <Rule />
        <MenuTabs>
          {menu.map(m => <MenuTab key={m} $active={m === '开始'}>{m}</MenuTab>)}
        </MenuTabs>
        <Rule $h={20} />
        <SearchButton $w={20} aria-label="搜索">
          <Icon><path d="M3 8A5 5 0 1 0 13 8A5 5 0 1 0 3 8M11.500 11.500L17.500 17.500" strokeWidth="1.200" /></Icon>
        </SearchButton>
        <Spacer />
        <Plain $w={20} aria-label="已同步">
          <Icon><path d="M6 16.500A4 4 0 0 1 4 9A6 6 0 0 1 15.500 8.500A4 4 0 0 1 14.500 16.500Z" /><path d="M7 11.500L9.500 14L13.500 9.500" stroke={green} /></Icon>
        </Plain>
        <ShareButton>
          <Icon color="#fff"><path d="M3.500 9C5 6.500 8 5.500 16 5.500M12.500 2.500L16 5.500L12.500 9M3.500 12V14.500A2 2 0 0 0 5.500 16.500H14A2 2 0 0 0 16 14.500V12" /></Icon>
          分享
        </ShareButton>
      </MenuBar>

      <HomeRibbon />

      <FormulaRow>
        <Field $w={162}>
          <input aria-label="名称框" defaultValue="G12" />
          <Chevron />
        </Field>
        <Field $pad={20}>
          <Icon><path d="M4 9A5.500 5.500 0 1 0 15 9A5.500 5.500 0 1 0 4 9M13.500 13L17 16.500M7 7.500H12M7 10.500H12" /></Icon>
          <Fx>fx</Fx>
          <Rule />
          <input aria-label="编辑栏" />
        </Field>
      </FormulaRow>

      <Spreadsheet />

      <SheetBar>
        <Plain $w={22} aria-label="第一张"><Icon size={14} box={14} color="#a39c9a"><path d="M2.500 2V12M11 3L7 7L11 11" strokeWidth="1.500" /></Icon></Plain>
        <Plain $w={22} aria-label="上一张"><Icon size={14} box={14} color="#a39c9a"><path d="M9 3L5 7L9 11" strokeWidth="1.500" /></Icon></Plain>
        <Plain $w={22} aria-label="下一张"><Icon size={14} box={14} color="#a39c9a"><path d="M5 3L9 7L5 11" strokeWidth="1.500" /></Icon></Plain>
        <Plain $w={22} aria-label="最后一张"><Icon size={14} box={14} color="#a39c9a"><path d="M11.500 2V12M3 3L7 7L3 11" strokeWidth="1.500" /></Icon></Plain>
        <SheetTab $w={88}>Sheet2</SheetTab>
        <SheetTab $w={81} $active>Sheet1</SheetTab>
        <Plain $w={24} aria-label="新建工作表"><Icon><path d="M5 9.500H15M10 4.500V14.500" strokeWidth="1.800" /></Icon></Plain>
        <Spacer />
        <HScroll>
          <i />
          <Triangle d="M6 1V7L1 4Z" />
          <HThumb />
          <Triangle d="M2 1V7L7 4Z" />
        </HScroll>
      </SheetBar>

      <StatusBar>
        <Plain $w={20} aria-label="宏">
          <Icon><path d="M2.500 3.500L4 7L5.500 3.500M7.500 3.500V7.500H9.500V3.500H7.500M7.500 5.500H9.500M11.500 8V3.500H16.500V6.500H14.500V16.500H5.500L4 14M6.500 16V12.500H10.500V9.500H7" /></Icon>
        </Plain>
        <Spacer />
        <Plain $w={20} aria-label="护眼模式">
          <Icon><path d="M3 10C6.500 4 13.500 4 17 10C13.500 16 6.500 16 3 10ZM7.500 10A2.500 2.500 0 1 0 12.500 10A2.500 2.500 0 1 0 7.500 10" /></Icon>
        </Plain>
        <ReadMode>
          <Icon><path d="M7.500 3.500H12.500V7.500H7.500ZM7.500 12.500H12.500V16.500H7.500ZM7 7.500H3.500V12.500H7M13 7.500H16.500V12.500H13M8.500 8.500H11.500V11.500H8.500Z" /></Icon>
          <Caret />
        </ReadMode>
        <Rule $h={14} />
        <Views>
          <View $w={24} $on aria-label="普通视图"><Icon><path d="M3.500 4.500H16.500V16.500H3.500ZM3.500 8.500H16.500M7.500 4.500V16.500M7.500 12.500H16.500" /></Icon></View>
          <View $w={24} aria-label="分页预览"><Icon><path d="M3.500 4.500H16.500V16.500H3.500ZM10 4.500V16.500" /></Icon></View>
          <View $w={24} aria-label="页面布局"><Icon><path d="M3.500 4.500H13.500V13.500H3.500ZM3.500 10.500H13.500M16.500 4V16.500H3" /></Icon></View>
        </Views>
        <Rule $h={14} />
        <ZoomValue>145%<Caret /></ZoomValue>
        <Plain $w={20} aria-label="缩小"><Icon><path d="M4 10.500H16" strokeWidth="1.800" /></Icon></Plain>
        <Zoom type="range" aria-label="缩放" value={zoom} onChange={e => setZoom(e.target.value)} />
        <Plain $w={14} aria-label="放大"><Icon><path d="M5 10.500H15M10 5.500V15.500" strokeWidth="1.600" /></Icon></Plain>
        <FullScreen $w={20} aria-label="全屏"><Icon><path d="M11.500 4.500H16.500V9.500M16.500 4.500L11.500 9.500M3.500 11.500V16.500H8.500M3.500 16.500L8.500 11.500" /></Icon></FullScreen>
      </StatusBar>

      <ImeBadge>
        CH
        <Icon size={12} box={12}><path d="M5.500 1C11.500 2 12 9 6.500 11C4.500 11.500 2 10.500 1 9C5 9.500 8 6 5.500 1Z" /></Icon>
        简
      </ImeBadge>

      <Watermark>
        <svg width="45" height="44" viewBox="0 0 45 44" aria-hidden="true">
          <defs>
            <linearGradient id="sw1" x1="1" y1="0" x2="0" y2="1">
              <stop offset="0" stopColor="#5cc6ee" />
              <stop offset="1" stopColor="#2a6fbf" />
            </linearGradient>
            <linearGradient id="sw2" x1="1" y1="0" x2="0" y2="1">
              <stop offset="0" stopColor="#36b06a" />
              <stop offset="1" stopColor="#d8e04a" />
            </linearGradient>
          </defs>
          <path d="M44 4C22 2 4 14 1 27C0 33 5 35 14 33C8 31 9 22 18 15C25 9 33 6 44 4Z" fill="url(#sw1)" />
          <path d="M12 26C16 18 26 13 33 16C28 16 19 21 19 26C19 29 23 29 25 26C23 34 9 33 12 26Z" fill="#3b83cb" />
          <path d="M26 19C34 14 43 18 41 26C38 36 22 42 6 41C18 39 30 34 32 26C33 22 30 19 26 19Z" fill="url(#sw2)" />
        </svg>
        <WatermarkText>极光下载站<small>www.xz7.com</small></WatermarkText>
      </Watermark>

      <Arrows width="1300" height="250" viewBox="0 0 1300 250" aria-hidden="true">
        <path d="M305 70L312 95L307 93V142H305L304 93L299 95Z" fill="#f00" stroke="#d00000" />
        <path d="M1269 142L1264 167L1260 163L1217 231L1215 229L1257 161L1251 160Z" fill="#f00" stroke="#d00000" />
      </Arrows>
    </Page>
  );
};

export default App;
